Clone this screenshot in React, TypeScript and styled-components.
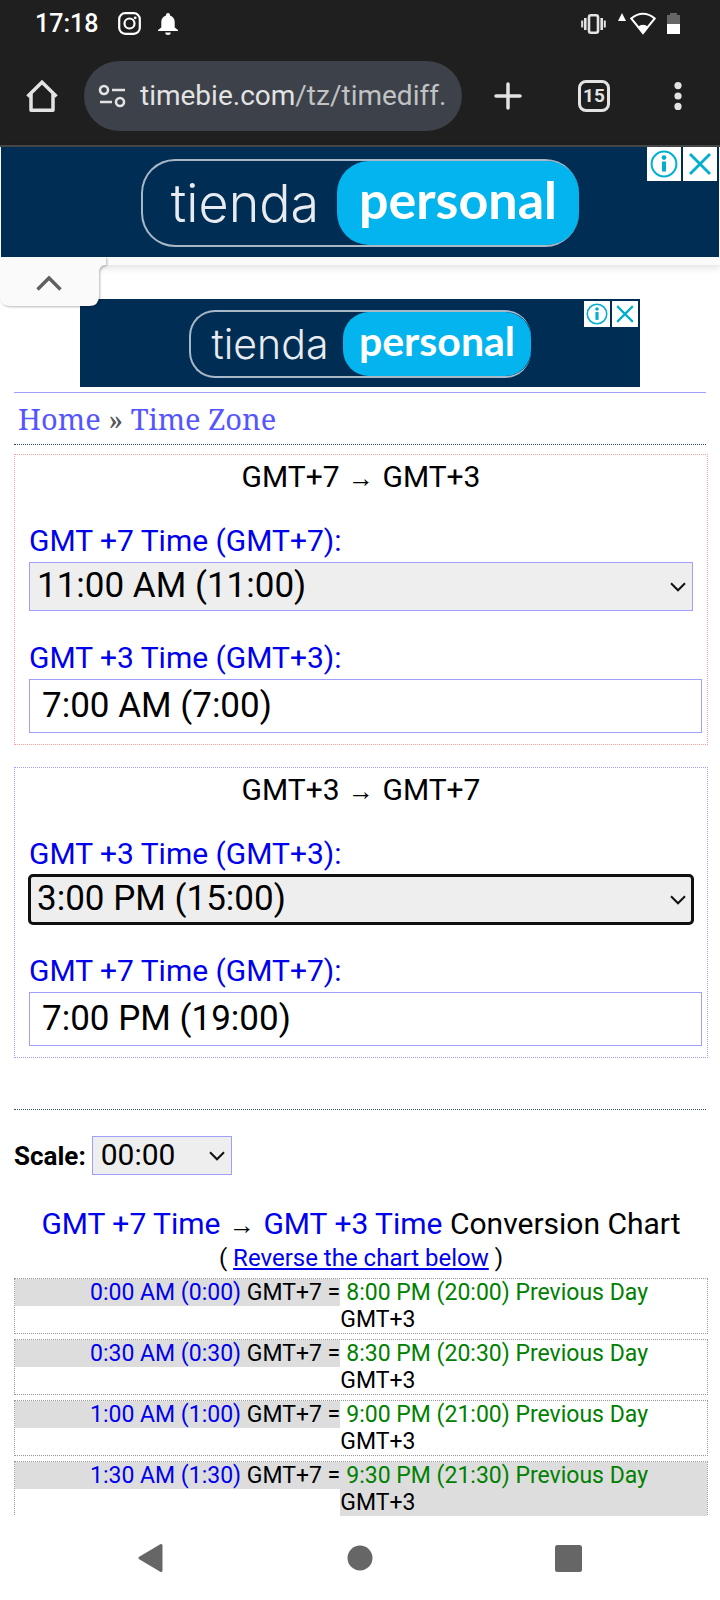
import React from "react";
import styled, { createGlobalStyle, css } from "styled-components";

const GlobalStyle = createGlobalStyle`
  *, *::before, *::after { box-sizing: border-box; }
  body { margin: 0; background: #fff; color: #000; font-family: Roboto, "Liberation Sans", sans-serif; }
  button { border: 0; padding: 0; background: none; cursor: pointer; display: flex; align-items: center; justify-content: center; }
  svg { display: block; flex: none; }
`;

const Screen = styled.div`
  display: flex;
  flex-direction: column;
  height: 100vh;
  overflow: hidden;
`;

const Chrome = styled.header`
  flex: none;
  background: #1f1f1f;
  color: #e3e3e3;
  border-bottom: 2px solid #484848;
`;

const StatusBar = styled.div`
  display: flex;
  align-items: center;
  height: 47px;
  padding: 0 40px 0 35px;
  color: #fff;
`;

const Clock = styled.time`
  font-size: 25px;
  font-weight: 500;
  line-height: 32px;
  margin-right: 20px;
`;

const StatusIcons = styled.div<{ $end?: boolean }>`
  display: flex;
  align-items: center;
  gap: ${(p) => (p.$end ? 11 : 17)}px;
  margin-left: ${(p) => (p.$end ? "auto" : 0)};
`;

const Toolbar = styled.div`
  display: flex;
  align-items: center;
  padding: 14px 38px 14px 26px;
`;

const UrlPill = styled.div`
  flex: 1;
  min-width: 0;
  display: flex;
  align-items: center;
  gap: 14px;
  height: 70px;
  margin: 0 32px 0 26px;
  padding: 0 12px 0 14px;
  border-radius: 35px;
  background: #3c414a;
`;

const Url = styled.span`
  min-width: 0;
  overflow: hidden;
  white-space: nowrap;
  font-size: 28px;
  line-height: 36px;
  color: #c0c2c3;
`;

const UrlHost = styled.span`
  color: #e3e3e3;
`;

const ToolbarActions = styled.div`
  display: flex;
  align-items: center;
  gap: 56px;
`;

const TabCount = styled.button`
  width: 32px;
  height: 32px;
  border: 3px solid #e3e3e3;
  border-radius: 8px;
  color: #e3e3e3;
  font: 700 19px/20px Roboto, sans-serif;
`;

const AnchorAd = styled.aside`
  position: relative;
  flex: none;
  background: #fafafa;
  padding: 0 1px 8px;
  box-shadow: 0 2px 8px rgba(0, 0, 0, 0.14);
  z-index: 1;
`;

const Banner = styled.div<{ $small?: boolean }>`
  position: relative;
  display: flex;
  justify-content: center;
  align-items: center;
  height: ${(p) => (p.$small ? 88 : 110)}px;
  background: #002d54;
  padding-top: 2px;
`;

const Logo = styled.div<{ $small?: boolean }>`
  display: flex;
  align-items: stretch;
  width: ${(p) => (p.$small ? 342 : 438)}px;
  height: ${(p) => (p.$small ? 68 : 88)}px;
  border: 2px solid #a9b8c6;
  border-right: 0;
  border-radius: ${(p) => (p.$small ? 26 : 34)}px;
  color: #e8ebef;
`;

const LogoLight = styled.span<{ $small?: boolean }>`
  flex: 1;
  padding-left: ${(p) => (p.$small ? 6 : 10)}px;
  text-align: center;
  font: 300 ${(p) => (p.$small ? "41px/64px" : "52px/86px")} Inter, sans-serif;
`;

const LogoBold = styled.span<{ $small?: boolean }>`
  width: ${(p) => (p.$small ? 188 : 242)}px;
  border-radius: ${(p) => (p.$small ? 26 : 32)}px;
  background: #03b4ee;
  color: #fff;
  text-align: center;
  font: 700 ${(p) => (p.$small ? "41px/58px" : "52px/76px")} Lato, sans-serif;
`;

const AdControls = styled.div<{ $small?: boolean }>`
  position: absolute;
  top: ${(p) => (p.$small ? 2 : 0)}px;
  right: 2px;
  display: flex;
  gap: 2px;
`;

const AdButton = styled.button<{ $small?: boolean }>`
  width: ${(p) => (p.$small ? 26 : 34)}px;
  height: ${(p) => (p.$small ? 26 : 34)}px;
  background: #fff;
`;

const CollapseButton = styled.button`
  position: absolute;
  left: 0;
  top: 110px;
  filter: drop-shadow(1px 1px 1px rgba(0, 0, 0, 0.28));
`;

const Page = styled.main`
  flex: 1;
  min-height: 0;
  overflow: hidden;
  padding: 34px 12px 0 14px;
`;

const InlineAd = styled.aside`
  max-width: 562px;
  margin: 0 auto 5px;
  padding-right: 2px;
`;

const Breadcrumb = styled.nav`
  border-top: 1px solid #9f9fff;
  border-bottom: 1px dotted #2f4f6f;
  margin-right: 2px;
  padding: 8px 4px;
  font: 29px/35px "Noto Serif", "Droid Serif", "DejaVu Serif", serif;
  color: #555;
`;

const Crumb = styled.a`
  color: #5555ff;
  text-decoration: none;
`;

const Panel = styled.section<{ $tone: string }>`
  margin-top: 9px;
  padding: 5px 14px 11px;
  border: 1px dotted ${(p) => p.$tone};

  & + & {
    margin-top: 22px;
  }
`;

const PanelTitle = styled.h2`
  margin: 0;
  text-align: center;
  font-size: 30px;
  line-height: 34px;
  font-weight: 400;
`;

const Arrow = styled.span`
  display: inline-block;
  width: 28px;
  text-align: center;
  font-family: "Liberation Serif", serif;
  font-size: 26px;
  line-height: 1;
`;

const Field = styled.div`
  margin-top: 30px;
`;

const Label = styled.label`
  display: block;
  margin-bottom: 4px;
  color: #0000ee;
  font-size: 30px;
  line-height: 34px;
`;

const SelectBox = styled.div<{ $compact?: boolean }>`
  display: grid;
  align-items: center;
  width: ${(p) => (p.$compact ? "140px" : "auto")};

  & > * {
    grid-area: 1 / 1;
  }

  & > svg {
    justify-self: end;
    margin-right: 7px;
    pointer-events: none;
  }
`;

const Select = styled.select<{ $compact?: boolean; $focused?: boolean }>`
  appearance: none;
  width: 100%;
  height: ${(p) => (p.$compact ? 39 : 49)}px;
  padding: ${(p) => (p.$compact ? "0 30px 4px 8px" : "0 30px 2px 7px")};
  border: 1px solid #9f9fff;
  border-radius: 0;
  background: #eee;
  color: #000;
  font: ${(p) => (p.$compact ? "30px" : "35px")} Roboto, sans-serif;
  ${(p) =>
    p.$focused &&
    css`
      border-radius: 4px;
      outline: 3px solid #101010;
      outline-offset: -2px;
    `}
`;

const Output = styled.input`
  width: calc(100% + 9px);
  height: 54px;
  padding: 0 12px 2px;
  border: 1px solid #9f9fff;
  background: #fff;
  color: #000;
  font: 35px Roboto, sans-serif;
`;

const ScaleRow = styled.div`
  display: flex;
  align-items: center;
  gap: 6px;
  margin: 51px 2px 0 0;
  padding-top: 26px;
  border-top: 1px dotted #2f4f6f;
`;

const ScaleLabel = styled.label`
  font-size: 26px;
  line-height: 34px;
  font-weight: 700;
`;

const ChartTitle = styled.h2`
  margin: 32px 0 1px;
  text-align: center;
  font-size: 30px;
  line-height: 34px;
  font-weight: 400;
`;

const Blue = styled.span`
  color: #0000ee;
`;

const Green = styled.span`
  color: #008000;
`;

const ReverseLine = styled.p`
  margin: 0 0 4px;
  text-align: center;
  font-size: 24px;
  line-height: 32px;
`;

const ReverseLink = styled.a`
  color: #0000ee;
`;

const Chart = styled.ul`
  display: grid;
  gap: 5px;
  margin: 0;
  padding: 0;
  list-style: none;
`;

const ChartRow = styled.li`
  display: grid;
  grid-template-columns: 47fr 53fr;
  align-items: start;
  border: 1px dotted #999;
  font-size: 23px;
  line-height: 27px;
`;

const FromCell = styled.span`
  background: #ddd;
  text-align: right;
  white-space: nowrap;
`;

const ToCell = styled.span<{ $shaded?: boolean }>`
  background: ${(p) => (p.$shaded ? "#ddd" : "none")};
`;

const Lead = styled.span`
  padding-left: 6px;
`;

const NavBar = styled.footer`
  flex: none;
  display: flex;
  height: 84px;
  padding: 0 47px;
  background: #fff;
`;

const NavButton = styled.button`
  flex: 1;
`;

const InfoIcon = ({ size }: { size: number }) => (
  <svg width={size} height={size} viewBox="0 0 28 28" fill="none" stroke="#00aecd">
    <circle cx="14" cy="14" r="12.4" strokeWidth="2" />
    <path d="M14 11.5V21.5" strokeWidth="4" />
    <circle cx="14" cy="7.6" r="2.3" fill="#00aecd" stroke="none" />
  </svg>
);

const CloseIcon = ({ size }: { size: number }) => (
  <svg width={size} height={size} viewBox="0 0 28 28" fill="none" stroke="#00aecd" strokeWidth="2.8">
    <path d="M4 4L24 24M24 4L4 24" />
  </svg>
);

const Caret = () => (
  <svg width="16" height="10" viewBox="0 0 16 10" fill="none" stroke="#111" strokeWidth="2">
    <path d="M1 1.3L8 8.3L15 1.3" />
  </svg>
);

const AdBanner = ({ small }: { small?: boolean }) => (
  <Banner $small={small}>
    <Logo $small={small}>
      <LogoLight $small={small}>tienda</LogoLight>
      <LogoBold $small={small}>personal</LogoBold>
    </Logo>
    <AdControls $small={small}>
      <AdButton $small={small} aria-label="Ad information">
        <InfoIcon size={small ? 22 : 28} />
      </AdButton>
      <AdButton $small={small} aria-label="Close ad">
        <CloseIcon size={small ? 22 : 28} />
      </AdButton>
    </AdControls>
  </Banner>
);

interface ConverterProps {
  id: string;
  tone: string;
  from: string;
  to: string;
  value: string;
  result: string;
  focused?: boolean;
}

const Converter = ({ id, tone, from, to, value, result, focused }: ConverterProps) => (
  <Panel $tone={tone}>
    <PanelTitle>
      GMT{from} <Arrow>→</Arrow> GMT{to}
    </PanelTitle>
    <Field>
      <Label htmlFor={`${id}-from`}>{`GMT ${from} Time (GMT${from}):`}</Label>
      <SelectBox>
        <Select id={`${id}-from`} $focused={focused} defaultValue={value}>
          <option>{value}</option>
        </Select>
        <Caret />
      </SelectBox>
    </Field>
    <Field>
      <Label htmlFor={`${id}-to`}>{`GMT ${to} Time (GMT${to}):`}</Label>
      <Output id={`${id}-to`} readOnly value={result} />
    </Field>
  </Panel>
);

const rows = [
  { from: "0:00 AM (0:00)", to: "8:00 PM (20:00) Previous Day" },
  { from: "0:30 AM (0:30)", to: "8:30 PM (20:30) Previous Day" },
  { from: "1:00 AM (1:00)", to: "9:00 PM (21:00) Previous Day" },
  { from: "1:30 AM (1:30)", to: "9:30 PM (21:30) Previous Day", shaded: true },
];

export default function App() {
  return (
    <Screen>
      <GlobalStyle />
      <Chrome>
        <StatusBar>
          <Clock>17:18</Clock>
          <StatusIcons>
            <svg width="23" height="23" viewBox="0 0 23 23" fill="none" stroke="#fff" strokeWidth="2.2">
              <rect x="1.2" y="1.2" width="20.6" height="20.6" rx="6" />
              <circle cx="11.5" cy="11.5" r="5" />
              <circle cx="17.2" cy="5.8" r="1.4" fill="#fff" stroke="none" />
            </svg>
            <svg width="20" height="22" viewBox="0 0 20 22" fill="#fff">
              <path d="M10 0a2 2 0 0 1 2 2v.6c3 .9 4.700 3.400 4.700 6.400v5.500L20 17v1H0v-1l3.300-2.500V9c0-3 1.700-5.500 4.700-6.400V2a2 2 0 0 1 2-2zM7.300 19.500h5.400a2.700 2.500 0 0 1-5.400 0z" />
            </svg>
          </StatusIcons>
          <StatusIcons $end>
            <svg width="25" height="20" viewBox="0 0 25 20" fill="none" stroke="#e3e3e3">
              <rect x="8" y="1.300" width="9" height="17.400" rx="2" strokeWidth="2.600" />
              <path d="M4.300 4v12M20.700 4v12" strokeWidth="2.600" />
              <path d="M1.200 6.500v7M23.800 6.500v7" strokeWidth="2" />
            </svg>
            <svg width="39" height="24" viewBox="0 0 39 24" fill="#fff">
              <path d="M5 1L9 9H1Z" />
              <path d="M14.200 6.500Q26 -3 37.800 6.500L26 21Z" fill="none" stroke="#fff" strokeWidth="2" />
              <path d="M20.500 15.200Q26 10.500 31.500 15.200L26 22.500Z" />
            </svg>
            <svg width="13" height="21" viewBox="0 0 13 21">
              <path d="M3 0h7v2h3v9H0V2h3z" fill="#666" />
              <path d="M0 11h13v10H0z" fill="#fff" />
            </svg>
          </StatusIcons>
        </StatusBar>
        <Toolbar>
          <button aria-label="Home">
            <svg width="32" height="32" viewBox="0 0 32 32" fill="none" stroke="#e3e3e3" strokeWidth="3.500" strokeLinejoin="round">
              <path d="M1.500 16.500L16 2.200L30.500 16.500" strokeLinejoin="miter" />
              <path d="M5 14V30.200H27V14" />
            </svg>
          </button>
          <UrlPill>
            <svg width="28" height="24" viewBox="0 0 28 24" fill="none" stroke="#e3e3e3" strokeWidth="2.600">
              <circle cx="6" cy="6" r="4" />
              <path d="M14 6h13M2 18h12" />
              <circle cx="22" cy="18" r="4" />
            </svg>
            <Url>
              <UrlHost>timebie.com</UrlHost>/tz/timediff.
            </Url>
          </UrlPill>
          <ToolbarActions>
            <button aria-label="New tab">
              <svg width="28" height="28" viewBox="0 0 28 28" stroke="#e3e3e3" strokeWidth="3.500" strokeLinecap="round">
                <path d="M14 2v24M2 14h24" />
              </svg>
            </button>
            <TabCount aria-label="Open tabs">15</TabCount>
            <button aria-label="More options">
              <svg width="16" height="28" viewBox="0 0 16 28" fill="#e3e3e3">
                <circle cx="12" cy="3.600" r="3.600" />
                <circle cx="12" cy="14" r="3.600" />
                <circle cx="12" cy="24.400" r="3.600" />
              </svg>
            </button>
          </ToolbarActions>
        </Toolbar>
      </Chrome>

      <AnchorAd>
        <AdBanner />
        <CollapseButton aria-label="Collapse ad">
          <svg width="106" height="49" viewBox="0 0 106 49">
            <path d="M0 0H106V8Q99 8 99 16V39Q99 49 89 49H10Q0 49 0 39Z" fill="#fafafa" />
            <path d="M37.500 32.500L49 21L60.500 32.500" fill="none" stroke="#606060" strokeWidth="3.400" />
          </svg>
        </CollapseButton>
      </AnchorAd>

      <Page>
        <InlineAd>
          <AdBanner small />
        </InlineAd>
        <Breadcrumb>
          <Crumb href="#home">Home</Crumb> » <Crumb href="#time-zone">Time Zone</Crumb>
        </Breadcrumb>

        <Converter id="forward" tone="#ff9f9f" from="+7" to="+3" value="11:00 AM (11:00)" result="7:00 AM (7:00)" />
        <Converter id="reverse" tone="#9f9fff" from="+3" to="+7" value="3:00 PM (15:00)" result="7:00 PM (19:00)" focused />

        <ScaleRow>
          <ScaleLabel htmlFor="scale">Scale:</ScaleLabel>
          <SelectBox $compact>
            <Select id="scale" $compact defaultValue="00:00">
              <option>00:00</option>
            </Select>
            <Caret />
          </SelectBox>
        </ScaleRow>

        <ChartTitle>
          <Blue>GMT +7 Time</Blue> <Arrow>→</Arrow> <Blue>GMT +3 Time</Blue> Conversion Chart
        </ChartTitle>
        <ReverseLine>
          ( <ReverseLink href="#reverse">Reverse the chart below</ReverseLink> )
        </ReverseLine>
        <Chart>
          {rows.map((row) => (
            <ChartRow key={row.from}>
              <FromCell>
                <Blue>{row.from}</Blue> GMT+7 =
              </FromCell>
              <ToCell $shaded={row.shaded}>
                <Lead>
                  <Green>{row.to}</Green>
                </Lead>{" "}
                GMT+3
              </ToCell>
            </ChartRow>
          ))}
        </Chart>
      </Page>

      <NavBar>
        <NavButton aria-label="Back">
          <svg width="26" height="30" viewBox="0 0 26 30" fill="#666" stroke="#666" strokeWidth="3" strokeLinejoin="round">
            <path d="M2 15L23 2.500V27.500Z" />
          </svg>
        </NavButton>
        <NavButton aria-label="Home screen">
          <svg width="26" height="26" viewBox="0 0 26 26" fill="#666">
            <circle cx="13" cy="13" r="12.500" />
          </svg>
        </NavButton>
        <NavButton aria-label="Recent apps">
          <svg width="27" height="27" viewBox="0 0 27 27" fill="#666">
            <rect width="27" height="27" rx="2.500" />
          </svg>
        </NavButton>
      </NavBar>
    </Screen>
  );
}
